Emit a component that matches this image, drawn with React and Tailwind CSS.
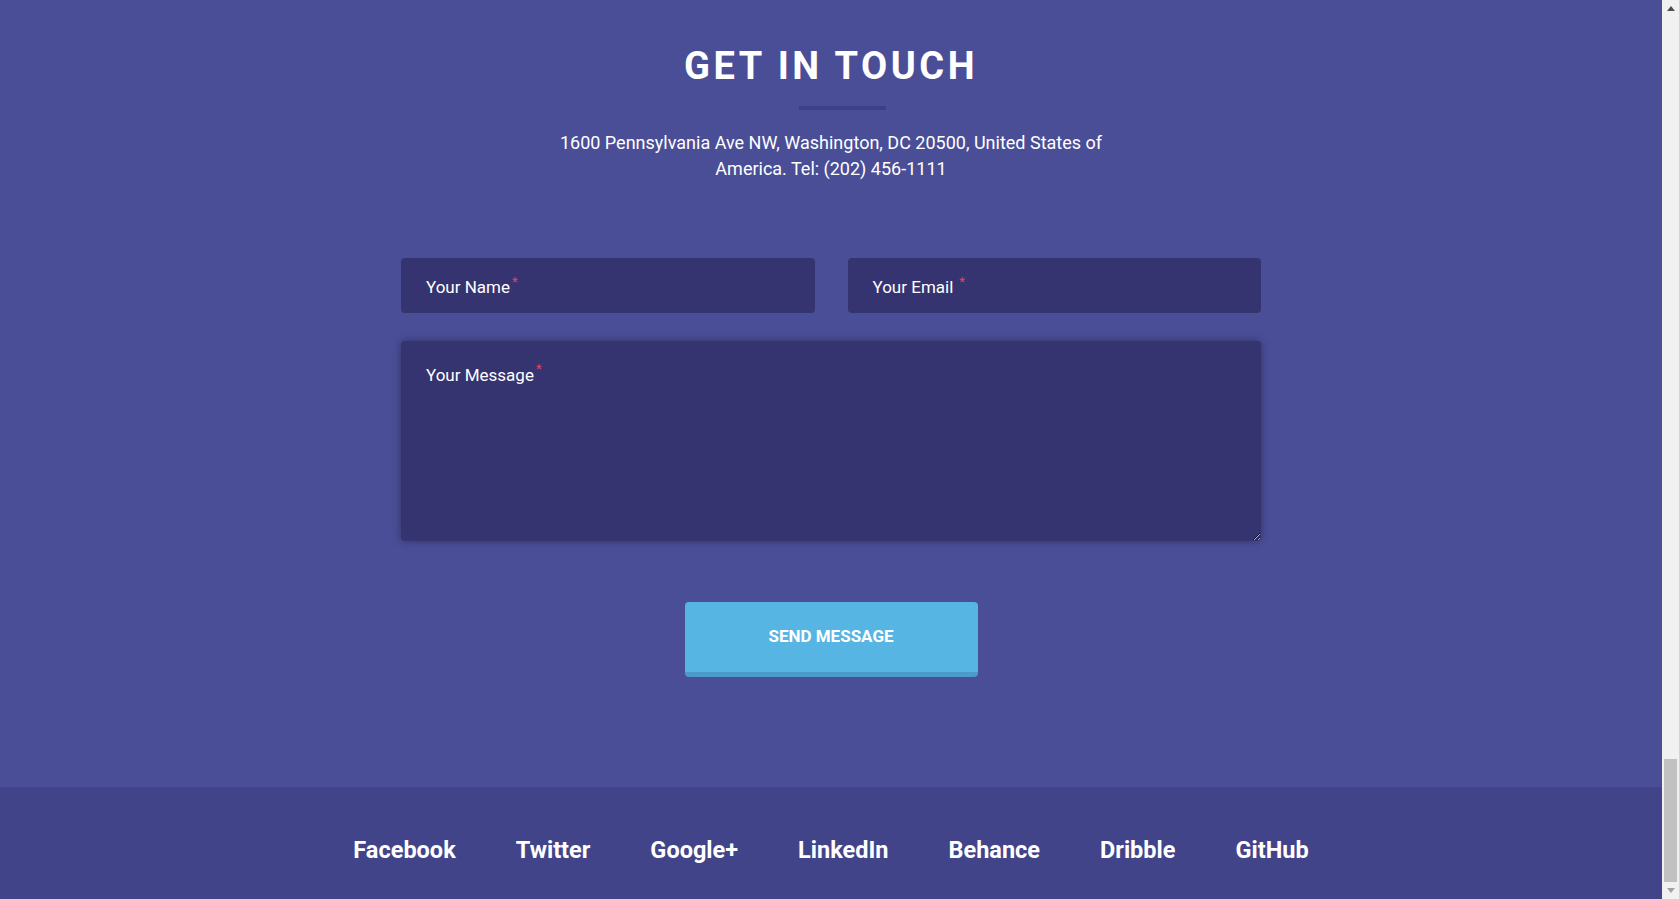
const links = ["Facebook", "Twitter", "Google+", "LinkedIn", "Behance", "Dribble", "GitHub"];

function Required({ space }) {
  return (
    <span className={`text-[#e8405e] text-[13px] leading-none align-top ${space ? "ml-[6px]" : "ml-[2px]"}`}>
      *
    </span>
  );
}

function Field({ label, space }) {
  return (
    <div className="relative">
      <input
        type="text"
        className="w-full h-[55px] rounded-[4px] bg-[#353470] outline-none px-[25px] text-white text-[17px]"
      />
      <label className="absolute inset-y-0 left-[25px] pt-[4px] flex items-center text-[17px] text-white pointer-events-none">
        <span>
          {label}
          <Required space={space} />
        </span>
      </label>
    </div>
  );
}

function ContactSection() {
  return (
    <section className="bg-[#4a4e97] pt-[42px] pb-[110px] text-white">
      <h2 className="text-center text-[38px] leading-[48px] font-bold tracking-[3.5px]">
        GET IN TOUCH
      </h2>

      <div className="flex justify-center mt-[16px]">
        <div className="w-[87px] h-[4px] bg-[#3e3f86] ml-[23px]" />
      </div>

      <p className="mx-auto mt-[20px] max-w-[590px] text-center text-[18px] leading-[26px]">
        1600 Pennsylvania Ave NW, Washington, DC 20500, United States of America. Tel: (202) 456-1111
      </p>

      <form className="mx-auto mt-[76px] w-[860px]" onSubmit={(e) => e.preventDefault()}>
        <div className="grid grid-cols-2 gap-[33px]">
          <Field label="Your Name" />
          <Field label="Your Email" space />
        </div>

        <div className="relative mt-[28px]">
          <textarea className="block w-full h-[200px] rounded-[4px] bg-[#353470] outline-none px-[25px] pt-[24px] text-white text-[17px] shadow-[0_0_9px_rgba(0,0,0,0.35)]" />
          <label className="absolute left-[25px] top-[21px] text-[17px] leading-[26px] text-white pointer-events-none">
            Your Message
            <Required />
          </label>
        </div>

        <div className="flex justify-center mt-[61px]">
          <button className="w-[293px] h-[75px] rounded-[4px] bg-[#57b5e3] border-b-[5px] border-[#4a9bcb] text-white text-[17px] font-bold uppercase">
            Send Message
          </button>
        </div>
      </form>
    </section>
  );
}

function Footer() {
  return (
    <footer className="h-[112px] bg-[#42448a] pt-[48px]">
      <ul className="flex justify-center gap-[60px]">
        {links.map((name) => (
          <li key={name}>
            <a href="#" className="text-white text-[23.5px] leading-[30px] font-bold">
              {name}
            </a>
          </li>
        ))}
      </ul>
    </footer>
  );
}

// the page in the shot is scrolled to its end, so the window scrollbar is drawn here
function Scrollbar() {
  return (
    <div className="w-[17px] shrink-0 bg-[#f1f1f1] flex flex-col">
      <div className="h-[17px] flex items-center justify-center">
        <svg width="8" height="5" viewBox="0 0 8 5">
          <path d="M0 5 L4 0 L8 5 Z" fill="#505050" />
        </svg>
      </div>
      <div className="flex-1 flex flex-col justify-end">
        <div className="h-[123px] mx-[2px] bg-[#c1c1c1]" />
      </div>
      <div className="h-[17px] flex items-center justify-center">
        <svg width="8" height="5" viewBox="0 0 8 5">
          <path d="M0 0 L8 0 L4 5 Z" fill="#a3a3a3" />
        </svg>
      </div>
    </div>
  );
}

export default function App() {
  return (
    <div className="h-screen flex overflow-hidden font-['Roboto',sans-serif]">
      <div className="flex-1 flex flex-col justify-end bg-[#4a4e97]">
        <ContactSection />
        <Footer />
      </div>
      <Scrollbar />
    </div>
  );
}
